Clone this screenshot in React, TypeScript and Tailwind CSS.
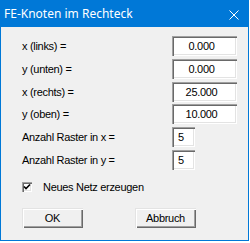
const rows = [
  { label: "x (links) =", value: "0.000", small: false, mt: "mt-0" },
  { label: "y (unten) =", value: "0.000", small: false, mt: "mt-[3px]" },
  { label: "x (rechts) =", value: "25.000", small: false, mt: "mt-[3px]" },
  { label: "y (oben) =", value: "10.000", small: false, mt: "mt-[2px]" },
  { label: "Anzahl Raster in x =", value: "5", small: true, mt: "mt-[3px]" },
  { label: "Anzahl Raster in y =", value: "5", small: true, mt: "mt-[3px]" },
];

const sunken =
  "bg-white shadow-[inset_1px_1px_0_#a0a0a0,inset_2px_2px_0_#696969,inset_-1px_-1px_0_#ffffff,inset_-2px_-2px_0_#e3e3e3]";

const raised =
  "bg-[#f0f0f0] shadow-[inset_1px_1px_0_#e3e3e3,inset_2px_2px_0_#ffffff,inset_-1px_-1px_0_#696969,inset_-2px_-2px_0_#a0a0a0]";

function Field({ value, small }: { value: string; small: boolean }) {
  if (small) {
    return (
      <div className={`${sunken} w-[23px] h-[20px] flex items-center pl-[6px] pt-[1px]`}>
        {value}
      </div>
    );
  }
  return (
    <div className={`${sunken} w-[65px] h-[20px] flex items-center justify-center pr-[6px] pt-[1px]`}>
      {value}
    </div>
  );
}

function Button({ label }: { label: string }) {
  return (
    <div className={`${raised} w-[61px] h-[20px] flex items-center justify-center pt-[1px]`}>
      {label}
    </div>
  );
}

export default function App() {
  return (
    <div
      className="w-[250px] h-[243px] bg-white"
      style={{ fontFamily: "'Liberation Sans', Arial, sans-serif" }}
    >
      <div className="w-[249px] h-[241px] border border-[#0078d7] bg-[#f0f0f0] flex flex-col">
        {/* Title bar */}
        <div className="h-[26px] bg-[#0078d7] flex items-center justify-between pl-[3px] pr-[9px]">
          <span className="text-white text-[12px] leading-none pb-[1px]" style={{ fontFamily: "'Noto Sans', sans-serif" }}>
            FE-Knoten im Rechteck
          </span>
          <svg width="10" height="10" viewBox="0 0 10 10" className="mt-[1px]">
            <path d="M0.5 0.5 L9.5 9.5 M9.5 0.5 L0.5 9.5" stroke="#ffffff" strokeWidth="1" fill="none" />
          </svg>
        </div>

        {/* Body */}
        <div className="flex flex-col pl-[21px] pt-[9px] text-[11px] tracking-[-0.3px] text-black leading-none">
          {rows.map((r) => (
            <div key={r.label} className={`flex items-center ${r.mt}`}>
              <div className="w-[150px]">{r.label}</div>
              <Field value={r.value} small={r.small} />
            </div>
          ))}

          <div className="flex items-center mt-[11px] h-[12px]">
            <div className={`${sunken} w-[10px] h-[10px] relative`}>
              <svg width="10" height="10" viewBox="0 0 10 10" className="absolute inset-0">
                <path d="M2 4.5 L4 6.5 L8 2.5" stroke="#000" strokeWidth="1.6" fill="none" />
              </svg>
            </div>
            <span className="ml-[11px] pt-[1px]">Neues Netz erzeugen</span>
          </div>

          <div className="flex mt-[15px]">
            <Button label="OK" />
            <div className="ml-[52px]">
              <Button label="Abbruch" />
            </div>
          </div>
        </div>
      </div>
    </div>
  );
}
